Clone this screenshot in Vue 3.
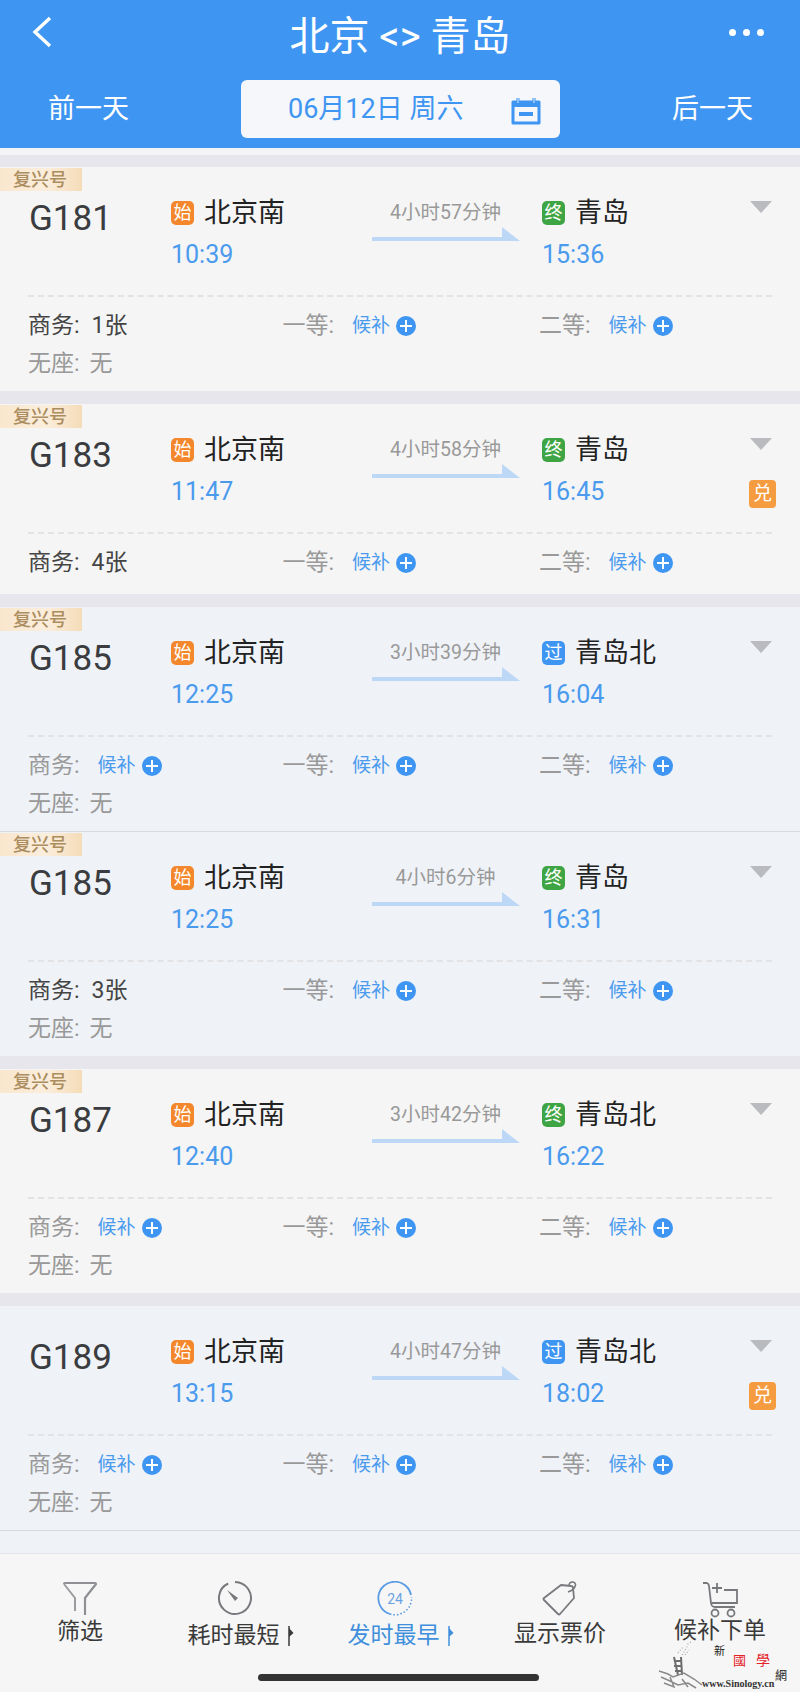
<template>
  <div class="page">
    <header class="header">
      <div class="title-row">
        <svg class="back" width="22" height="32" viewBox="0 0 22 32"><path d="M19 2 L4 16 L19 30" fill="none" stroke="#fff" stroke-width="3.4"/></svg>
        <span class="title">北京 &lt;&gt; 青岛</span>
        <span class="dots"><i></i><i></i><i></i></span>
      </div>
      <div class="date-row">
        <span class="day-btn">前一天</span>
        <div class="date-box">
          <span class="date-text">06月12日 周六</span>
          <svg class="calendar" width="30" height="28" viewBox="0 0 30 28">
            <path d="M2 5 H28 V26 H2 Z" fill="none" stroke="#3f96f2" stroke-width="3" stroke-linejoin="round"/>
            <path d="M2 5 H28 V10 H2 Z" fill="#3f96f2"/>
            <path d="M7 1 V7 M23 1 V7" stroke="#3f96f2" stroke-width="3"/>
            <path d="M7 1 V6 M23 1 V6" stroke="#fff" stroke-width="0.8"/>
            <rect x="8" y="15" width="14" height="4" fill="#3f96f2"/>
          </svg>
        </div>
        <span class="day-btn">后一天</span>
      </div>
    </header>

    <div class="top-gap"></div>

    <section
      v-for="(t, i) in trains"
      :key="i"
      class="card"
      :class="{ tinted: t.tinted, flush: t.flush }"
    >
      <span v-if="t.fuxing" class="tag">复兴号</span>
      <div class="main">
        <div class="train-no">{{ t.no }}</div>
        <div class="stop">
          <div class="station"><b class="badge orange">始</b>北京南</div>
          <div class="time">{{ t.dep }}</div>
        </div>
        <div class="duration">
          <span>{{ t.dur }}</span>
          <svg class="arrow" width="148" height="14" viewBox="0 0 148 14"><path d="M0 10 H130 V0 L148 14 H0 Z" fill="#bcd8f6"/></svg>
        </div>
        <div class="stop">
          <div class="station">
            <b class="badge" :class="t.pass ? 'blue' : 'green'">{{ t.pass ? '过' : '终' }}</b>{{ t.to }}
          </div>
          <div class="time">{{ t.arr }}</div>
        </div>
        <span class="caret"></span>
        <b v-if="t.redeem" class="redeem">兑</b>
      </div>
      <div class="seats">
        <div class="seat-row">
          <div v-for="s in t.seats" :key="s.name" class="seat" :class="{ dark: s.left }">
            <span class="seat-name">{{ s.name }}:</span>
            <span v-if="s.left" class="left">{{ s.left }}</span>
            <span v-else class="wait">候补<svg width="20" height="20" viewBox="0 0 20 20"><circle cx="10" cy="10" r="10" fill="#3f96f2"/><path d="M4 10 H16 M10 4 V16" stroke="#fff" stroke-width="2"/></svg></span>
          </div>
        </div>
        <div v-if="t.noSeat" class="seat-row">
          <div class="seat"><span class="seat-name">无座:</span><span class="none">无</span></div>
        </div>
      </div>
    </section>

    <div class="list-end"></div>

    <nav class="tabbar">
      <div class="tab">
        <svg width="36" height="36" viewBox="0 0 36 36">
          <path d="M2 3 Q2 2 3 2 H33 Q34 2 34 3 L23 17 V34" fill="none" stroke="#8e9094" stroke-width="2.2"/>
          <path d="M2 3 L13 17 V30" fill="none" stroke="#9a9ca0" stroke-width="2"/>
        </svg>
        <span>筛选</span>
      </div>
      <div class="tab sort shifted">
        <svg width="36" height="36" viewBox="0 0 36 36">
          <path d="M18 1 A16 16 0 1 1 11.2 2.5" fill="none" stroke="#77797d" stroke-width="2"/>
          <path d="M10 9 L21 17 L18 20 Z" fill="#77797d"/>
        </svg>
        <span>耗时最短<svg class="mini" width="8" height="20" viewBox="0 0 8 20"><path d="M2 0 V20" stroke="currentColor" stroke-width="1.5"/><path d="M2 2 L6.5 7 L2 11 Z" fill="currentColor"/></svg></span>
      </div>
      <div class="tab sort shifted active">
        <svg width="36" height="36" viewBox="0 0 36 36">
          <path d="M34 14 A16.5 16.5 0 1 0 13 33" fill="none" stroke="#5a9be4" stroke-width="1.8"/>
          <path d="M13 33 A16.5 16.5 0 0 0 34.5 16" fill="none" stroke="#5a9be4" stroke-width="1.6" stroke-dasharray="1.5 2"/>
          <text x="18" y="22.5" text-anchor="middle" class="svg-num">24</text>
        </svg>
        <span>发时最早<svg class="mini" width="8" height="20" viewBox="0 0 8 20"><path d="M2 0 V20" stroke="currentColor" stroke-width="1.5"/><path d="M2 2 L6.5 7 L2 11 Z" fill="currentColor"/></svg></span>
      </div>
      <div class="tab sort price">
        <svg width="36" height="36" viewBox="0 0 36 36">
          <path d="M19 4 L29 5 Q31 5 31 7 L32 17 L18 33 Q17 34 16 33 L2 19 Q1 18 2 17 Z" fill="none" stroke="#77797d" stroke-width="1.8" stroke-linejoin="round"/>
          <path d="M26 11 C33 9 36 2 31 1 C28 0.5 27 3 27 5" fill="none" stroke="#77797d" stroke-width="1.6"/>
        </svg>
        <span>显示票价</span>
      </div>
      <div class="tab cart">
        <svg width="36" height="37" viewBox="0 0 36 37">
          <path d="M1 2 H5 Q7 3 7 5 L9 22 Q9.5 26 13 26 H33" fill="none" stroke="#77797d" stroke-width="1.8"/>
          <path d="M22 9 H35 V22 H9" fill="none" stroke="#77797d" stroke-width="1.8"/>
          <path d="M15 2 V12 M10 7 H20" stroke="#77797d" stroke-width="1.8"/>
          <circle cx="13" cy="32" r="3.5" fill="none" stroke="#77797d" stroke-width="1.8"/>
          <circle cx="29" cy="32" r="3.5" fill="none" stroke="#77797d" stroke-width="1.8"/>
        </svg>
        <span>候补下单</span>
      </div>
      <div class="home-bar"></div>
      <div class="watermark">
        <svg class="wm-art" width="46" height="50" viewBox="0 0 46 50">
          <path d="M16 16 L20 34 M23 16 L24 34 M16 20 H23 M16 25 H24 M17 30 H24" fill="none" stroke="#6d6d6d" stroke-width="2"/>
          <path d="M1 30 L10 33 L15 36 L26 32 L36 38 L44 44 M3 36 L12 40 L20 44 L30 42 L38 47 M6 42 L16 46 L12 36 M24 38 L30 46" fill="none" stroke="#8a8a8a" stroke-width="1.5"/>
          <path d="M24 14 L28 8 L30 3 L33 1 M27 14 L31 9 M20 12 L25 6" fill="none" stroke="#aaa" stroke-width="1.2" stroke-dasharray="1 2"/>
        </svg>
        <span class="wm-xin">新</span>
        <span class="wm-guo">國</span>
        <span class="wm-xue">學</span>
        <span class="wm-wang">網</span>
        <span class="wm-url">www.Sinology.cn</span>
      </div>
    </nav>
  </div>
</template>

<script setup>
const wait = (name) => ({ name });
const trains = [
  { no: "G181", dep: "10:39", arr: "15:36", dur: "4小时57分钟", to: "青岛", fuxing: true, noSeat: true,
    seats: [{ name: "商务", left: "1张" }, wait("一等"), wait("二等")] },
  { no: "G183", dep: "11:47", arr: "16:45", dur: "4小时58分钟", to: "青岛", fuxing: true, redeem: true,
    seats: [{ name: "商务", left: "4张" }, wait("一等"), wait("二等")] },
  { no: "G185", dep: "12:25", arr: "16:04", dur: "3小时39分钟", to: "青岛北", pass: true, fuxing: true, noSeat: true, tinted: true, flush: true,
    seats: [wait("商务"), wait("一等"), wait("二等")] },
  { no: "G185", dep: "12:25", arr: "16:31", dur: "4小时6分钟", to: "青岛", fuxing: true, noSeat: true, tinted: true,
    seats: [{ name: "商务", left: "3张" }, wait("一等"), wait("二等")] },
  { no: "G187", dep: "12:40", arr: "16:22", dur: "3小时42分钟", to: "青岛北", fuxing: true, noSeat: true,
    seats: [wait("商务"), wait("一等"), wait("二等")] },
  { no: "G189", dep: "13:15", arr: "18:02", dur: "4小时47分钟", to: "青岛北", pass: true, noSeat: true, tinted: true, redeem: true, flush: true,
    seats: [wait("商务"), wait("一等"), wait("二等")] },
];
</script>

<style>
html, body { margin: 0; background: #f5f5f5; }
</style>

<style scoped>
.page {
  width: 800px;
  height: 1692px;
  overflow: hidden;
  font-family: Roboto, "Noto Sans CJK SC", sans-serif;
  background: #e6e6ec;
}
.header {
  height: 148px;
  background: #3f96f2;
  color: #fff;
  display: flex;
  flex-direction: column;
}
.title-row {
  height: 66px;
  display: flex;
  align-items: center;
  justify-content: center;
  position: relative;
}
.title { font-size: 40px; }
.back { position: absolute; left: 31px; top: 16px; }
.dots { position: absolute; left: 729px; top: 29px; display: flex; gap: 7px; }
.dots i { width: 7px; height: 7px; border-radius: 50%; background: #fff; }
.date-row {
  display: flex;
  justify-content: space-between;
  align-items: center;
  padding: 14px 47px 0 48px;
}
.day-btn { font-size: 27px; margin-bottom: 6px; }
.date-box {
  width: 319px;
  height: 58px;
  background: #f5f7fa;
  border-radius: 6px;
  color: #3f96f2;
  display: flex;
  align-items: center;
  position: relative;
  padding-left: 47px;
  box-sizing: border-box;
}
.date-text { font-size: 27px; padding-bottom: 6px; }
.calendar { position: absolute; left: 270px; top: 17px; }
.top-gap { height: 19px; background: linear-gradient(#f4f4f6 0, #f4f4f6 7px, #e6e6ec 7px); }
.card {
  position: relative;
  background: #f5f5f5;
  margin-bottom: 13px;
}
.card.flush { margin-bottom: 0; border-bottom: 1px solid #d8dade; }
.card.tinted { background: #eff2f7; }
.tag {
  position: absolute;
  left: 0;
  top: 1px;
  width: 82px;
  height: 23px;
  line-height: 23px;
  padding-left: 13px;
  box-sizing: border-box;
  font-size: 18px;
  font-weight: 500;
  color: #ab8d5f;
  background: linear-gradient(90deg, #f9e6cd, #fbeedd 55%, #f5dcb8);
}
.main {
  height: 130px;
  margin: 0 28px;
  border-bottom: 2px dashed #e3e3e5;
  box-sizing: border-box;
  display: flex;
  position: relative;
}
.train-no {
  width: 143px;
  padding: 32px 0 0 1px;
  box-sizing: border-box;
  font-size: 35px;
  line-height: 40px;
  color: #3a3c40;
}
.stop { width: 200px; padding-top: 32px; flex: none; }
.duration {
  width: 149px;
  margin-right: 22px;
  flex: none;
  padding-top: 35px;
  font-size: 19.5px;
  line-height: 22px;
  color: #999;
  display: flex;
  flex-direction: column;
  align-items: center;
  white-space: nowrap;
}
.arrow { margin-top: 3px; }
.station {
  display: flex;
  align-items: center;
  font-size: 27px;
  line-height: 28px;
  color: #222;
}
.badge {
  width: 23px;
  height: 24px;
  border-radius: 5px;
  margin-right: 10px;
  color: #fff;
  font-size: 18px;
  line-height: 24px;
  font-weight: 400;
  text-align: center;
}
.orange { background: #f4872c; }
.green { background: #3fa544; }
.blue { background: #3f96f2; }
.time {
  margin-top: 13px;
  font-size: 25px;
  line-height: 30px;
  color: #4a9aee;
}
.caret {
  position: absolute;
  right: 0;
  top: 34px;
  border-left: 11px solid transparent;
  border-right: 11px solid transparent;
  border-top: 12px solid #b9bbbf;
}
.redeem {
  position: absolute;
  left: 721px;
  top: 76px;
  width: 27px;
  height: 28px;
  line-height: 28px;
  text-align: center;
  border-radius: 4px;
  background: #f59b40;
  color: #fff;
  font-size: 19px;
  font-weight: 400;
}
.seats {
  padding: 7px 0 11px 28px;
  min-height: 60px;
  box-sizing: border-box;
}
.seat-row { display: flex; height: 38px; }
.seat {
  width: 256.5px;
  flex: none;
  display: flex;
  align-items: center;
  font-size: 23px;
  color: #999;
}
.seat:first-child { width: 254.5px; }
.seat.dark { color: #444; }
.seat-name { margin-right: 10px; }
.left { color: #444; margin-left: 2px; }
.none { color: #999; }
.wait {
  display: flex;
  align-items: center;
  margin-left: 8px;
  font-size: 19px;
  color: #4a9aee;
}
.wait svg { margin-left: 6px; margin-top: 5px; }
.list-end {
  height: 22px;
  background: #eff2f7;
}
.tabbar {
  position: relative;
  height: 139px;
  border-top: 1px solid #e2e4e8;
  box-sizing: border-box;
  background: #f6f6f6;
  display: flex;
  color: #3a3a3a;
}
.tab {
  width: 160px;
  display: flex;
  flex-direction: column;
  align-items: center;
  padding-top: 27px;
  box-sizing: border-box;
  font-size: 23px;
  line-height: 30px;
}
.tab span { display: flex; align-items: center; }
.tab.sort span { margin-top: 4px; }
.tab.price span { margin-top: 2px; }
.tab.cart span { margin-top: -2px; }
.shifted svg:first-child { margin-right: 10px; }
.shifted span { margin-left: 12px; }
.mini { margin-left: 7px; }
.active { color: #3f8fdc; }
.svg-num { font-size: 14px; fill: #6aa3e4; }
.home-bar {
  position: absolute;
  left: 258px;
  top: 120px;
  width: 281px;
  height: 7px;
  border-radius: 4px;
  background: #333;
}
.watermark {
  position: absolute;
  left: 655px;
  top: 85px;
  width: 145px;
  height: 54px;
  font-family: "Liberation Serif", "Noto Sans CJK TC", serif;
}
.watermark span { position: absolute; display: block; line-height: 1; color: #222; }
.wm-art { position: absolute; left: 3px; top: 2px; }
.watermark .wm-xin { left: 59px; top: 7px; font-size: 11px; }
.watermark .wm-guo { left: 78px; top: 15px; font-size: 13px; color: #e3222a; }
.watermark .wm-xue { left: 101px; top: 15px; font-size: 14px; color: #e3222a; }
.watermark .wm-wang { left: 120px; top: 31px; font-size: 12px; }
.watermark .wm-url { left: 47px; top: 40px; font-size: 10px; font-weight: 700; color: #333; }
</style>
